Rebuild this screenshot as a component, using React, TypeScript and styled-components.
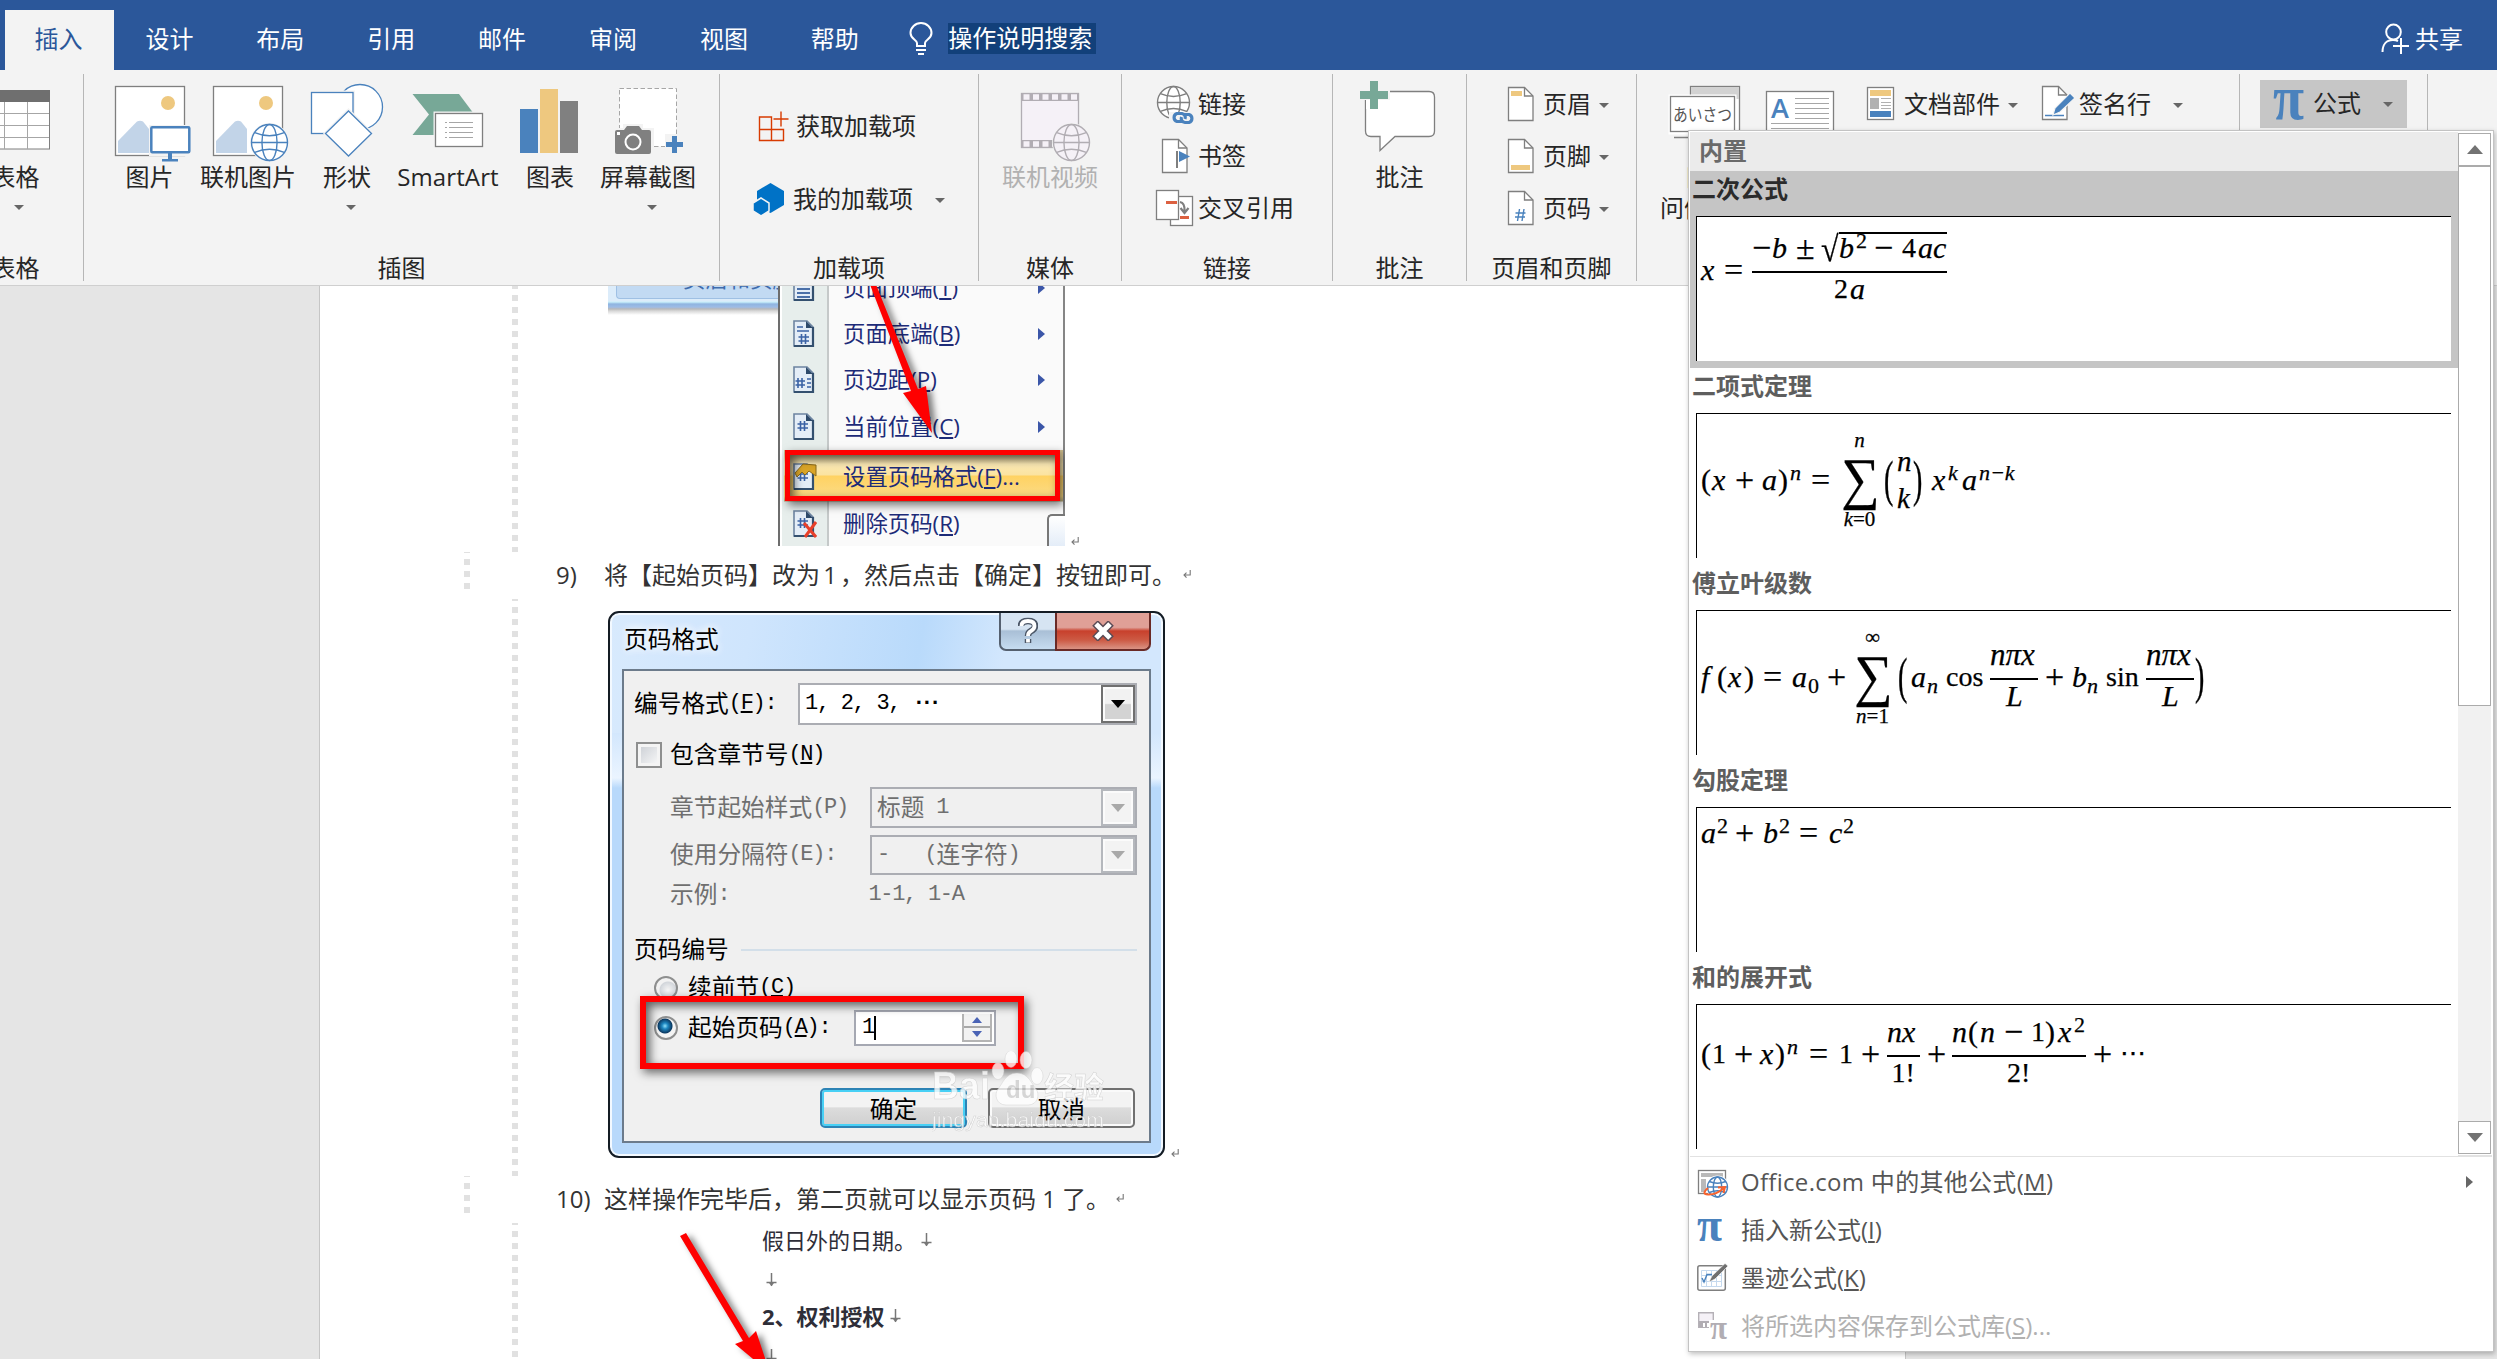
import React from "react";
import styled, { createGlobalStyle, css } from "styled-components";

const UI = `"Open Sans", "Noto Sans CJK SC", sans-serif`;
const MATH = `"Liberation Serif", "DejaVu Serif", serif`;
const BLUE = "#4a82bd";
const GREY = "#7f7f7f";

const GlobalStyle = createGlobalStyle`
  * { box-sizing: border-box; }
  body { margin: 0; background: #e5e5e5; font-family: ${UI}; }
  svg { display: block; flex: none; }
`;

const Window = styled.div`
  position: relative;
  display: flex;
  flex-direction: column;
  width: 2497px;
  height: 1359px;
  overflow: hidden;
  background: #e5e5e5;
  font-family: ${UI};
  font-size: 24px;
  line-height: 28px;
  color: #262626;
  white-space: nowrap;
`;

/* ---------- title bar ---------- */

const TitleBar = styled.header`
  display: flex;
  height: 70px;
  flex: none;
  padding: 10px 34px 0 5px;
  background: #2b579a;
  color: #fff;
`;

const Tab = styled.div<{ $active?: boolean }>`
  width: ${(p) => (p.$active ? 109 : 110.9)}px;
  display: flex;
  align-items: center;
  justify-content: center;
  padding-bottom: 3px;
  padding-right: ${(p) => (p.$active ? 2 : 0)}px;
  ${(p) => p.$active && css`background: #f3f3f3; color: #2b579a;`}
`;

const TellMe = styled.div`
  display: flex;
  align-items: center;
  padding-bottom: 3px;
  margin-left: 15px;
`;

const TellMeText = styled.span`
  margin-left: 10px;
  height: 31px;
  line-height: 30px;
  width: 148px;
  background: #12407a;
`;

const Share = styled.div`
  display: flex;
  align-items: center;
  gap: 5px;
  margin-left: auto;
  padding-bottom: 3px;
`;

/* ---------- ribbon ---------- */

const Ribbon = styled.section`
  display: flex;
  flex: none;
  height: 216px;
  padding-top: 4px;
  background: #f3f3f3;
  border-bottom: 1px solid #cfcfcf;
`;

const Group = styled.div<{ $w: number; $shift?: number }>`
  flex: none;
  width: ${(p) => p.$w}px;
  margin-left: ${(p) => p.$shift ?? 0}px;
  height: 207px;
  display: flex;
  flex-direction: column;
  border-right: 1px solid #b6b6b6;
`;

const GroupBody = styled.div<{ $left?: number; $center?: boolean }>`
  display: flex;
  flex: none;
  height: 181px;
  padding-left: ${(p) => p.$left ?? 0}px;
  justify-content: ${(p) => (p.$center ? "center" : "flex-start")};
`;

const GroupLabel = styled.div`
  text-align: center;
  line-height: 26px;
`;

const BigBtn = styled.div<{ $w?: number; $off?: boolean }>`
  width: ${(p) => p.$w ?? 100}px;
  padding-top: 6px;
  display: flex;
  flex-direction: column;
  align-items: center;
  line-height: 26px;
  color: ${(p) => (p.$off ? "#b1b1b1" : "inherit")};
`;

const Rows = styled.div<{ $top: number; $h: number }>`
  padding-top: ${(p) => p.$top}px;
  & > div { height: ${(p) => p.$h}px; }
`;

const Row = styled.div`
  display: flex;
  align-items: center;
`;

const RowText = styled.span`
  line-height: 26px;
  padding-bottom: 2px;
`;

const Caret = styled.i<{ $gap?: number; $top?: number }>`
  flex: none;
  width: 0;
  height: 0;
  margin-left: ${(p) => p.$gap ?? 0}px;
  margin-top: ${(p) => p.$top ?? 0}px;
  border: 5px solid transparent;
  border-top: 5px solid #666;
  border-bottom: 0;
`;

const CaretLine = styled.span`
  display: flex;
  align-items: center;
  line-height: 32px;
  margin-top: 2px;
`;

const EquationBtn = styled.div`
  display: flex;
  align-items: center;
  width: 147px;
  height: 48px;
  margin-top: 6px;
  padding-left: 13px;
  background: #c6c6c6;
`;

/* ---------- document ---------- */

const Canvas = styled.main`
  flex: 1;
  padding-left: 319px;
  background: #e5e5e5;
`;

const Page = styled.div`
  width: 1587px;
  height: 1073px;
  overflow: hidden;
  background: #fff;
  border-left: 1px solid #c6c6c6;
  border-right: 1px solid #c6c6c6;
  color: #333;
`;

const Section = styled.div<{ $h: number }>`
  display: flex;
  height: ${(p) => p.$h}px;
`;

const Dashes = styled.div<{ $left: number; $phase: number; $h?: string }>`
  flex: none;
  width: 6px;
  margin-left: ${(p) => p.$left}px;
  height: ${(p) => p.$h ?? "100%"};
  background: linear-gradient(#e1e1e1 6px, transparent 6px) 0 ${(p) => p.$phase}px / 6px 12px;
`;

const Figure = styled.div<{ $top?: number }>`
  display: flex;
  align-items: flex-end;
  align-self: flex-start;
  margin: ${(p) => p.$top ?? 0}px 0 0 90px;
`;

const ParaNo = styled.span`
  width: 48px;
  margin-left: 86px;
  line-height: 45px;
`;

const ParaText = styled.span`
  display: flex;
  align-items: center;
  line-height: 45px;
  height: 45px;
`;

const Mark = styled.span<{ $gap: number }>`
  margin-left: ${(p) => p.$gap}px;
`;

const Num = styled.span<{ $w: number }>`
  display: inline-block;
  width: ${(p) => p.$w}px;
  text-align: center;
`;

/* ---------- page-number menu figure ---------- */

const MenuShot = styled.div`
  position: relative;
  display: flex;
  width: 457px;
  height: 260px;
  overflow: hidden;
  font-size: 22.4px;
  color: #1d2b78;
`;

const OldRibbon = styled.div`
  width: 170px;
  height: 29px;
  padding-left: 8px;
  background: linear-gradient(#dcecfa 0 15px, #c9f0fb 16px, #8fb4e0 18px, #9dbce6 21px, #b9b9b9 23px, #d8d8d8 25px, #fff 29px);
`;

const OldRibbonTab = styled.div`
  height: 13px;
  padding-left: 66px;
  overflow: hidden;
  background: #c2daf3;
  border: solid #9fc0e4;
  border-width: 0 0 1px 1px;
  border-radius: 0 0 0 4px;
  color: #3f6cad;
  & span { display: block; margin-top: -21px; }
`;

const OldMenu = styled.div`
  width: 287px;
  padding-left: 2px;
  border-left: 2px solid #6d6d6d;
  border-right: 2px solid #858585;
  background: linear-gradient(90deg, #fff 2px, #e7eeec 2px 47px, #c5c9c9 47px 49px, #fafafa 49px);
`;

const OldItem = styled.div<{ $h?: number; $hot?: boolean; $first?: boolean }>`
  display: flex;
  align-items: center;
  height: ${(p) => p.$h ?? 46.3}px;
  margin-top: ${(p) => (p.$first ? -21.5 : 0)}px;
  padding: 0 18px 0 9px;
  ${(p) => p.$hot && css`
    margin-left: 2px;
    padding-left: 7px;
    background: linear-gradient(#cdbb8c 3px, #fbe9b4 14px, #fbe3a0 25px, #ffd262 26px, #fbdb84 46px, #b9a97a 51px, transparent 52px);
  `}
`;

const OldIcon = styled.span`
  width: 52px;
`;

const SubArrow = styled.i<{ $c?: string }>`
  margin-left: auto;
  border: 6.5px solid transparent;
  border-left: 7px solid ${(p) => p.$c ?? "#3b56a8"};
  border-right: 0;
`;

const RedFrame = styled.div<{ $x: number; $y: number; $w: number; $h: number; $b: number }>`
  position: absolute;
  left: ${(p) => p.$x}px;
  top: ${(p) => p.$y}px;
  width: ${(p) => p.$w}px;
  height: ${(p) => p.$h}px;
  border: ${(p) => p.$b}px solid #fe0000;
  box-shadow: 3px 4px 9px rgba(0, 0, 0, 0.55), inset 4px 4px 10px rgba(0, 0, 0, 0.6);
`;

const Overlay = styled.svg`
  position: absolute;
  left: 0;
  top: 0;
  filter: drop-shadow(5px 3px 3px rgba(0, 0, 0, 0.5));
`;

const Corner = styled.div`
  position: absolute;
  right: 0;
  bottom: 0;
  width: 18px;
  height: 32px;
  border: solid #777;
  border-width: 2px 0 0 2px;
  border-radius: 5px 0 0 0;
  background: linear-gradient(#fff, #e4edf8);
`;

/* ---------- page-number dialog figure ---------- */

const Dialog = styled.div`
  position: relative;
  width: 557px;
  height: 547px;
  padding: 0 12px;
  border: 2px solid #141c24;
  border-radius: 11px;
  background: linear-gradient(100deg, #d8eafd 0, #cfe5fd 25%, #b9dafb 55%, #d3e7fd 70%, #d3e7fd 100%) 0 0 / 100% 120px no-repeat,
    linear-gradient(#d3e7fd 120px, #eaf4ff 165px, #b8d9fb 175px);
  box-shadow: inset 0 0 0 2px #f3f9ff;
  font-size: 23.7px;
  color: #000;
`;

const DialogHead = styled.div`
  display: flex;
  height: 56px;
  padding-left: 2px;
`;

const DialogTitle = styled.span`
  line-height: 53px;
  text-shadow: 0 0 8px #fff, 0 0 8px #fff;
`;

const HelpBtn = styled.span`
  width: 56px;
  height: 38px;
  margin-left: auto;
  display: flex;
  align-items: center;
  justify-content: center;
  border: 2px solid #55606f;
  border-top: 0;
  border-right: 0;
  border-radius: 0 0 0 7px;
  background: linear-gradient(#d6e4f2 45%, #a9bfd6 50%, #c6dcf0);
`;

const CloseBtn = styled(HelpBtn)`
  width: 96px;
  margin-left: 0;
  border-color: #6a2a26;
  border-right: 2px solid #6a2a26;
  border-radius: 0 0 7px 0;
  background: linear-gradient(#e0a097 40%, #c8402c 50%, #cc5a44 75%, #d99384);
`;

const Client = styled.div`
  height: 474px;
  border: 2px solid #6c7b8b;
  background: #f0f0f0;
  padding: 0 12px 0 10px;
`;

const Field = styled.div<{ $top: number; $h: number; $left?: number; $off?: boolean; $gap?: number }>`
  display: flex;
  align-items: center;
  gap: ${(p) => p.$gap ?? 0}px;
  margin-top: ${(p) => p.$top}px;
  height: ${(p) => p.$h}px;
  padding-left: ${(p) => p.$left ?? 0}px;
  color: ${(p) => (p.$off ? "#6f6f6f" : "#000")};
`;

const FieldText = styled.span`
  padding-bottom: 2px;
  line-height: 26px;
`;

const Mono = styled.span<{ $w?: number }>`
  width: ${(p) => (p.$w ? `${p.$w}px` : "auto")};
  font-family: "Liberation Mono", monospace;
  font-size: 22px;
  letter-spacing: -1.3px;
  white-space: pre;
`;

const Dots = styled(Mono)`
  letter-spacing: -5px;
  font-weight: 700;
`;

const Combo = styled.div<{ $w: number; $off?: boolean }>`
  display: flex;
  align-items: center;
  width: ${(p) => p.$w}px;
  height: 100%;
  margin-left: auto;
  padding-left: 5px;
  border: 2px solid #abadb3;
  background: ${(p) => (p.$off ? "#f0f0f0" : "#fff")};
`;

const ComboBtn = styled.span<{ $off?: boolean }>`
  display: flex;
  align-items: center;
  justify-content: center;
  width: 34px;
  height: 100%;
  margin-left: auto;
  border: 2px solid ${(p) => (p.$off ? "#b5b8bd" : "#707070")};
  background: ${(p) => (p.$off ? "#f3f3f3" : "linear-gradient(#f2f2f2 48%, #d3d3d3 52%)")};
  box-shadow: inset 0 0 0 2px #fbfbfb;
  & i { border: 7px solid transparent; border-top: 8px solid ${(p) => (p.$off ? "#a9a9a9" : "#000")}; border-bottom: 0; }
`;

const Check = styled.span`
  width: 26px;
  height: 26px;
  margin-right: 8px;
  border: 2px solid #8e8f8f;
  box-shadow: inset 0 0 0 3px #f4f4f4;
  background: linear-gradient(135deg, #c8ccd2, #fbfbfb);
`;

const Radio = styled.span<{ $on?: boolean }>`
  width: 24px;
  height: 24px;
  margin-right: 10px;
  border: 2px solid #8e8f8f;
  border-radius: 50%;
  background: ${(p) =>
    p.$on
      ? "radial-gradient(circle at 45% 40%, #8fe0fa 0, #1d86c0 3px, #0b3a63 7px, #f4f4f4 8px)"
      : "radial-gradient(circle at 60% 60%, #f6f6f6 0, #d2d6db 8px, #f2f2f2 9px)"};
`;

const Rule = styled.span`
  flex: 1;
  height: 2px;
  margin-left: 12px;
  background: #d3dfe9;
`;

const Spin = styled.div`
  display: flex;
  width: 142px;
  height: 36px;
  margin-left: auto;
  margin-right: 141px;
  padding: 2px 2px 2px 6px;
  align-items: center;
  border: 2px solid #a5a8b2;
  background: #fff;
`;

const TextCaret = styled.i`
  width: 2px;
  height: 24px;
  background: #000;
`;

const SpinBtns = styled.span`
  display: flex;
  flex-direction: column;
  width: 30px;
  height: 28px;
  margin-left: auto;
  border: 2px solid #b4b4b4;
  border-top: 0;
`;

const SpinHalf = styled.span<{ $up?: boolean }>`
  display: flex;
  flex: 1;
  align-items: center;
  justify-content: center;
  background: #f2f2f2;
  border-bottom: ${(p) => (p.$up ? "2px solid #a8a8a8" : "0")};
  & i {
    border: 5px solid transparent;
    ${(p) => (p.$up ? "border-bottom: 6px solid #4a63b5; border-top: 0;" : "border-top: 6px solid #4a63b5; border-bottom: 0;")}
  }
`;

const DlgBtn = styled.span<{ $primary?: boolean }>`
  width: 147px;
  height: 40px;
  display: flex;
  align-items: center;
  justify-content: center;
  padding-top: 2px;
  border: 2px solid ${(p) => (p.$primary ? "#2d83b5" : "#707070")};
  border-radius: 5px;
  background: linear-gradient(#f3f3f3 46%, #dcdcdc 50%, #cfcfcf);
  box-shadow: inset 0 0 0 2px ${(p) => (p.$primary ? "#48d0f5" : "#fafafa")};
`;

const Watermark = styled.div`
  position: absolute;
  left: 322px;
  top: 438px;
  opacity: 0.78;
`;

/* ---------- contract figure ---------- */

const ContractShot = styled.div`
  position: relative;
  width: 400px;
  height: 136px;
  padding: 3px 0 0 154px;
  line-height: 28px;
  font-size: 22px;
  color: #2e2e38;
`;

const ContractLine = styled.div<{ $h: number; $bold?: boolean; $left?: number }>`
  display: flex;
  align-items: center;
  gap: 5px;
  height: ${(p) => p.$h}px;
  padding-left: ${(p) => p.$left ?? 0}px;
  font-weight: ${(p) => (p.$bold ? 700 : 400)};
`;

/* ---------- equation gallery ---------- */

const Gallery = styled.aside`
  position: absolute;
  left: 1688px;
  top: 130px;
  width: 806px;
  height: 1222px;
  padding: 1px;
  border: 1px solid #c3c3c3;
  background: #fff;
  box-shadow: 1px 2px 5px rgba(0, 0, 0, 0.25);
  color: #555;
`;

const GalleryTop = styled.div`
  display: flex;
  height: 1025px;
  border-bottom: 2px solid #e2e2e2;
`;

const GalleryList = styled.div`
  width: 768px;
`;

const GalleryHead = styled.div`
  height: 39px;
  padding-left: 9px;
  line-height: 37px;
  font-weight: 700;
  color: #6a6a6a;
  background: #ebebeb;
`;

const Item = styled.div<{ $on?: boolean }>`
  height: 197px;
  padding: 0 7px 0 6px;
  background: ${(p) => (p.$on ? "#c5c5c5" : "#fff")};
`;

const ItemTitle = styled.div<{ $on?: boolean }>`
  height: 45px;
  margin-left: -4px;
  line-height: 36px;
  font-weight: 700;
  color: ${(p) => (p.$on ? "#2b2b2b" : "#5e5e5e")};
`;

const Preview = styled.div<{ $axis: number }>`
  display: flex;
  align-items: center;
  width: 755px;
  height: 145px;
  padding-left: 4px;
  padding-bottom: ${(p) => Math.max(0, 144 - 2 * p.$axis)}px;
  border: solid #000;
  border-width: 1px 0 0 1px;
  background: #fff;
  color: #000;
  font-family: ${MATH};
  font-size: 28px;
  -webkit-text-stroke: 0.25px #000;
`;

const Scroll = styled.div`
  width: 34px;
  padding: 1px 1px 1px 0;
  display: flex;
  flex-direction: column;
`;

const ScrollBtn = styled.div<{ $down?: boolean }>`
  height: 33px;
  display: flex;
  align-items: center;
  justify-content: center;
  border: 1px solid #ababab;
  background: #fff;
  & i {
    border: 8px solid transparent;
    ${(p) => (p.$down ? "border-top: 9px solid #737373; border-bottom: 0;" : "border-bottom: 9px solid #737373; border-top: 0;")}
  }
`;

const Thumb = styled.div`
  height: 540px;
  border: 1px solid #ababab;
  background: #fff;
`;

const Track = styled.div`
  flex: 1;
  background: #f1f1f1;
`;

const MenuItem = styled.div<{ $off?: boolean }>`
  display: flex;
  align-items: center;
  height: 48px;
  padding: 0 19px 0 7px;
  color: ${(p) => (p.$off ? "#b1b1b1" : "#555")};
  & > svg { margin-right: 12px; }
`;

const Latin = styled.span<{ $sp?: number }>`
  letter-spacing: ${(p) => p.$sp ?? 0}px;
`;

const MenuBlock = styled.div`
  padding-top: 1px;
`;

/* ---------- math pieces ---------- */

const Tk = styled.span<{ $w: number; $up?: boolean; $s?: number }>`
  flex: none;
  width: ${(p) => p.$w}px;
  padding-bottom: 5px;
  line-height: 30px;
  font-style: ${(p) => (p.$up ? "normal" : "italic")};
  font-size: ${(p) => p.$s ?? (p.$up ? 28 : 30)}px;
`;

const Sup = styled.span<{ $w: number; $up?: boolean }>`
  flex: none;
  width: ${(p) => p.$w}px;
  padding-bottom: 19px;
  line-height: 14px;
  font-size: 22px;
  font-style: ${(p) => (p.$up ? "normal" : "italic")};
`;

const Sub = styled(Sup)`
  padding: 13px 0 0;
`;

const Frac = styled.span<{ $w: number; $r: number }>`
  flex: none;
  width: ${(p) => p.$w}px;
  margin-right: ${(p) => p.$r}px;
  display: flex;
  flex-direction: column;
`;

const Numer = styled.span`
  display: flex;
  align-items: center;
  height: 39px;
  padding-bottom: 4px;
  border-bottom: 1px solid #000;
`;

const Denom = styled.span`
  display: flex;
  align-items: center;
  justify-content: center;
  height: 39px;
  padding-bottom: 2px;
  border-top: 1px solid #000;
`;

const Radicand = styled.span`
  display: flex;
  align-items: center;
  height: 36px;
  border-top: 2px solid #000;
  padding-bottom: 1px;
`;

const Root = styled.span`
  flex: none;
  width: 18px;
  line-height: 30px;
  padding-bottom: 3px;
  font-size: 32px;
  transform: scaleY(1.12);
`;

const BigOp = styled.span<{ $w: number }>`
  flex: none;
  display: flex;
  flex-direction: column;
  width: ${(p) => p.$w}px;
  font-size: 21px;
`;

const Limit = styled.span<{ $low?: boolean; $italic?: boolean }>`
  height: 24px;
  width: 37px;
  text-align: center;
  line-height: ${(p) => (p.$low ? 15 : 24)}px;
  font-style: ${(p) => (p.$italic ? "italic" : "normal")};
`;

const Sigma = styled.span`
  height: 60px;
  line-height: 54px;
  font-size: 54px;
  transform: scaleY(1.06);
`;

const Tall = styled.span<{ $w: number }>`
  flex: none;
  width: ${(p) => p.$w}px;
  padding-bottom: 2px;
  line-height: 30px;
  transform: scaleY(1.8);
`;

const Stack = styled.span<{ $w: number }>`
  flex: none;
  width: ${(p) => p.$w}px;
  display: flex;
  flex-direction: column;
  font-style: italic;
  font-size: 29px;
  line-height: 40px;
  padding-bottom: 8px;
  & span { height: 37px; }
`;

/* ---------- drawings ---------- */

type Box = { box: string; children: React.ReactNode };
const Art = ({ box, children }: Box) => {
  const [, , w, h] = box.split(" ");
  return (
    <svg width={w} height={h} viewBox={box} fill="none">
      {children}
    </svg>
  );
};

const Globe = ({ cx, cy, r, c = BLUE, fill = "#fff", halo = "#f3f3f3" }: { cx: number; cy: number; r: number; c?: string; fill?: string; halo?: string }) => (
  <g stroke={c} strokeWidth="1.4">
    <circle cx={cx} cy={cy} r={r + 1.5} fill={halo} stroke="none" />
    <circle cx={cx} cy={cy} r={r} fill={fill} />
    <ellipse cx={cx} cy={cy} rx={r * 0.42} ry={r} />
    <path d={`M${cx - r} ${cy}H${cx + r}M${cx - r * 0.82} ${cy - r * 0.55}Q${cx} ${cy - r * 0.2} ${cx + r * 0.82} ${cy - r * 0.55}M${cx - r * 0.82} ${cy + r * 0.55}Q${cx} ${cy + r * 0.2} ${cx + r * 0.82} ${cy + r * 0.55}`} />
  </g>
);

const Photo = ({ x }: { x: number }) => (
  <g>
    <rect x={x + 0.5} y="86.5" width="69" height="69" fill="#fff" stroke={GREY} strokeWidth="1.3" />
    <circle cx={x + 53} cy="103" r="7" fill="#eec87f" />
    <path d={`M${x + 3} 153V141L${x + 22} 121.5Q${x + 25} 120 ${x + 28} 121.5L${x + 34} 129V153Z`} fill="#c2d4e8" />
  </g>
);

const Sheet = ({ x, y, children }: { x: number; y: number; children?: React.ReactNode }) => (
  <g>
    <path d={`M${x} ${y}H${x + 16}L${x + 24.5} ${y + 8.5}V${y + 33}H${x}Z`} fill="#fff" stroke={GREY} strokeWidth="1.3" />
    <path d={`M${x + 16} ${y}V${y + 8.5}H${x + 24.5}`} stroke={GREY} strokeWidth="1.3" />
    {children}
  </g>
);

const Pi = ({ w, h, c = BLUE }: { w: number; h: number; c?: string }) => (
  <svg width={w} height={h} viewBox={`0 0 ${w} ${h}`}>
    <text x="0" y={h - 1} fill={c} fontFamily="Liberation Serif" fontWeight="700" fontSize={h * 2} textLength={w} lengthAdjust="spacingAndGlyphs">π</text>
  </svg>
);

const Return = () => (
  <svg width="8" height="9" viewBox="0 0 8 9" fill="none" stroke="#777" strokeWidth="1.1">
    <path d="M7.2 0V5H1M3.5 2.6L1 5L3.5 7.6" />
  </svg>
);

const DownMark = () => (
  <svg width="11" height="16" viewBox="0 0 11 16" fill="none" stroke="#777" strokeWidth="1.5">
    <path d="M5.5 1V14M0.5 10.5H10.5M3.5 10.5L5.5 13L7.5 10.5" />
  </svg>
);

const OldPage = ({ kind }: { kind: number }) => (
  <svg width="26" height="28" viewBox="0 0 26 28" fill="none">
    <path d="M3 1H16L22 7V26H3Z" fill="#e4edf7" stroke="#6d84a1" strokeWidth="1.600" />
    <path d="M22 7V26H3" stroke="#34506f" strokeWidth="2.200" />
    <path d="M15 1V8H22Z" fill="#2e4a6b" />
    {kind === 0 && <path d="M6 11H19M6 15H19M6 19H19M6 23H19" stroke="#4a6fa8" strokeWidth="2" />}
    {kind === 1 && <path d="M6 7H12M6 11H18M10.500 14V24M14.500 14V24M7.500 17H18M7.500 21H18" stroke="#3a62a5" strokeWidth="1.600" />}
    {kind === 2 && <path d="M7 12V22M11 12V22M4.500 15H14M4.500 19H14M16 13H20M16 17H20M16 21H20" stroke="#3a62a5" strokeWidth="1.600" />}
    {kind >= 3 && <path d="M9.500 8V18M13.500 8V18M6.500 11H17M6.500 15H17" stroke="#3a62a5" strokeWidth="1.600" />}
    {kind === 4 && <path d="M4 10L12 1L25 2V13L18 8L14 12L11 9L6 14Z" fill="#d9a427" stroke="#8a6a1c" />}
    {kind === 5 && <path d="M13 13L25 27M25 12L14 27" stroke="#e8402a" strokeWidth="3" />}
  </svg>
);

const Mn = ({ k }: { k: string }) => (
  <>
    (<u>{k}</u>)
  </>
);

/* ---------- app ---------- */

export default function App() {
  return (
    <>
      <GlobalStyle />
      <Window>
        <TitleBar>
          <Tab $active>插入</Tab>
          {["设计", "布局", "引用", "邮件", "审阅", "视图", "帮助"].map((t) => (
            <Tab key={t}>{t}</Tab>
          ))}
          <TellMe>
            <svg width="33" height="36" viewBox="905 23 33 36" fill="none" stroke="#fff" strokeWidth="2">
              <path d="M917 48V45C917 42 910.5 41 910.5 35A10.5 10 0 0 1 931.500 35C931.500 41 925 42 925 45V48Z" />
              <path d="M916 52H926M918 56H924" />
            </svg>
            <TellMeText>操作说明搜索</TellMeText>
          </TellMe>
          <Share>
            <svg width="30" height="34" viewBox="2379 21 30 34" fill="none" stroke="#fff" strokeWidth="2">
              <ellipse cx="2392.500" cy="31" rx="7.300" ry="7.500" />
              <path d="M2381.500 51C2381.500 43 2386 39 2392 39Q2395 39 2397 40M2400 37V53M2392 45H2408" />
            </svg>
            共享
          </Share>
        </TitleBar>

        <Ribbon>
          <Group $w={136} $shift={-52}>
            <GroupBody $center>
              <BigBtn>
                <Art box="-29 80 90 84">
                  <rect x="-18" y="90.5" width="67.500" height="58.500" fill="#fff" stroke={GREY} />
                  <path d="M-18 90H50V102H-18Z" fill="#6f6f6f" />
                  <path d="M-18 113.500H49M-18 125.500H49M-18 137.500H49M4.500 102V149M27.500 102V149" stroke="#a6a6a6" />
                </Art>
                表格
                <Caret $top={15} $gap={7} />
              </BigBtn>
            </GroupBody>
            <GroupLabel>表格</GroupLabel>
          </Group>

          <Group $w={636}>
            <GroupBody $left={16}>
              <BigBtn $w={99}>
                <Art box="105 80 90 84">
                  <Photo x={115} />
                  <rect x="149" y="125" width="43" height="31" fill="#f3f3f3" />
                  <rect x="151.300" y="127.200" width="38" height="25" rx="1" fill="#fff" stroke={BLUE} strokeWidth="2.500" />
                  <path d="M168 153H172V159H178V161.500H162V159H168Z" fill={BLUE} />
                </Art>
                图片
              </BigBtn>
              <BigBtn $w={98}>
                <Art box="203 80 90 84">
                  <Photo x={213} />
                  <Globe cx={269.5} cy={142.5} r={18} />
                </Art>
                联机图片
              </BigBtn>
              <BigBtn>
                <Art box="302 80 90 84">
                  <circle cx="360" cy="107" r="22.500" fill="#fff" stroke={BLUE} strokeWidth="1.300" />
                  <rect x="309.500" y="90.500" width="45.500" height="45" fill="#f3f3f3" />
                  <rect x="311.500" y="92.500" width="41.500" height="41" fill="#fff" stroke={BLUE} strokeWidth="1.300" />
                  <path d="M348.500 108L374 133.500L348.500 159L323 133.500Z" fill="#f3f3f3" />
                  <path d="M348.500 111L371.500 133.500L348.500 156L325.500 133.500Z" fill="#fff" stroke={BLUE} strokeWidth="1.300" />
                </Art>
                形状
                <Caret $top={15} $gap={7} />
              </BigBtn>
              <BigBtn $w={102}>
                <Art box="403 80 90 84">
                  <path d="M412.500 94H459L474 114H460V135H412.500L429 114.500Z" fill="#77a897" />
                  <rect x="433.500" y="111.500" width="51" height="37" fill="#f3f3f3" />
                  <rect x="435.500" y="113.500" width="47" height="33" fill="#fff" stroke={GREY} strokeWidth="1.300" />
                  <path d="M449 122.500H473M449 127.500H473M449 132.500H473M449 137.500H473M445 122.500H447M445 127.500H447M445 132.500H447M445 137.500H447" stroke="#a6a6a6" />
                </Art>
                <Latin $sp={0.1}>SmartArt</Latin>
              </BigBtn>
              <BigBtn $w={102}>
                <Art box="505 80 90 84">
                  <path d="M520 109H538V153H520Z" fill={BLUE} />
                  <path d="M540 89H558V153H540Z" fill="#eec87f" />
                  <path d="M560 101H578V153H560Z" fill="#808080" />
                </Art>
                图表
              </BigBtn>
              <BigBtn $w={94}>
                <Art box="603 80 90 84">
                  <rect x="619.500" y="88.500" width="57" height="58" fill="#fff" stroke="#a6a6a6" strokeDasharray="4.500 2.500" />
                  <path d="M613 128H623V124H643V128H654V156H613Z" fill="#f3f3f3" />
                  <path d="M615 132Q615 130 617 130H624L627 126H639L642 130H649Q651 130 651 132V152Q651 154 649 154H617Q615 154 615 152Z" fill="#808080" />
                  <circle cx="633" cy="142" r="7.500" stroke="#fff" strokeWidth="2" />
                  <path d="M617 132H620V135H617Z" fill="#fff" />
                  <path d="M665 134H685V155H665Z" fill="#f3f3f3" />
                  <path d="M672 136H677V142H683V147H677V153H672V147H666V142H672Z" fill={BLUE} />
                </Art>
                屏幕截图
                <Caret $top={15} $gap={8} />
              </BigBtn>
            </GroupBody>
            <GroupLabel>插图</GroupLabel>
          </Group>

          <Group $w={259}>
            <GroupBody $left={29}>
              <Rows $top={16.5} $h={73}>
                <Row>
                  <Art box="749 104 47 44">
                    <path d="M759.500 116H771.500V128.500H783.500V139.500H759.500ZM759.500 128.500H771.500V139.500M773.500 118H788.500M781 110.500V125.500" stroke="#d83b01" strokeWidth="1.400" />
                  </Art>
                  <RowText>获取加载项</RowText>
                </Row>
                <Row>
                  <Art box="749 178 44 44">
                    <path d="M770.500 183L784 191V205L770.500 213L757 205V191Z" fill="#0072c6" />
                    <path d="M761 198L769 203V211L761 216L753 211V203Z" fill="#0072c6" stroke="#f3f3f3" strokeWidth="1.500" />
                  </Art>
                  <RowText>我的加载项</RowText>
                  <Caret $gap={22} />
                </Row>
              </Rows>
            </GroupBody>
            <GroupLabel>加载项</GroupLabel>
          </Group>

          <Group $w={143}>
            <GroupBody $center>
              <BigBtn $off>
                <Art box="1005 80 90 84">
                  <rect x="1021.500" y="93.500" width="57" height="54" fill="#f5f1f7" stroke="#b1adb3" strokeWidth="1.300" />
                  <path d="M1021 93H1079V101H1021ZM1021 140H1079V148H1021Z" fill="#b1adb3" />
                  <path d="M1023.500 97H1079M1023.500 144H1079" stroke="#f5f1f7" strokeWidth="5.500" strokeDasharray="6 3.500" />
                  <Globe cx={1071.5} cy={142.5} r={18} c="#b1adb3" fill="#f5f1f7" />
                </Art>
                联机视频
              </BigBtn>
            </GroupBody>
            <GroupLabel>媒体</GroupLabel>
          </Group>

          <Group $w={211}>
            <GroupBody $left={30}>
              <Rows $top={5} $h={52}>
                <Row>
                  <Art box="1152 83 46 44">
                    <Globe cx={1173.5} cy={102.5} r={16} c={GREY} />
                    <path d="M1169 112H1197V125H1169Z" fill="#f3f3f3" />
                    <path d="M1182 121.500H1177A4.200 4.200 0 0 1 1177 113.500H1182A4 4 0 0 1 1185 119M1184 114.500H1189A4.200 4.200 0 0 1 1189 122.500H1185A4 4 0 0 1 1181.500 117" stroke={BLUE} strokeWidth="3.200" />
                  </Art>
                  <RowText>链接</RowText>
                </Row>
                <Row>
                  <Art box="1152 135 46 44">
                    <Sheet x={1162.5} y={139.5} />
                    <path d="M1177 151V168" stroke={GREY} strokeWidth="2" />
                    <path d="M1179 151L1190 156.500L1179 162Z" fill={BLUE} />
                  </Art>
                  <RowText>书签</RowText>
                </Row>
                <Row>
                  <Art box="1152 187 46 44">
                    <rect x="1170.500" y="196.500" width="22" height="29" fill="#fff" stroke={GREY} strokeWidth="1.300" />
                    <rect x="1156.500" y="190.500" width="22" height="29" fill="#fff" stroke={GREY} strokeWidth="1.300" />
                    <path d="M1166 202.500H1177M1180 217.500H1189" stroke="#dc6141" strokeWidth="3" />
                    <path d="M1180 202Q1185 203 1184.500 211M1180.500 208L1184.500 213L1188.500 208" stroke={GREY} strokeWidth="2.200" />
                  </Art>
                  <RowText>交叉引用</RowText>
                </Row>
              </Rows>
            </GroupBody>
            <GroupLabel>链接</GroupLabel>
          </Group>

          <Group $w={134}>
            <GroupBody $center>
              <BigBtn>
                <Art box="1355 80 90 84">
                  <path d="M1371 91.500H1429Q1434.500 91.500 1434.500 97V131Q1434.500 136.500 1429 136.500H1395L1380 150.500V136.500H1371Q1365.500 136.500 1365.500 131V97Q1365.500 91.500 1371 91.500Z" fill="#fff" stroke={GREY} strokeWidth="1.300" />
                  <path d="M1358 80H1390V100H1380V100H1364V110H1358Z" fill="#f3f3f3" />
                  <path d="M1366 100H1389V109H1366Z" fill="#fff" />
                  <path d="M1370 81H1378V91H1388V99H1378V109H1370V99H1360V91H1370Z" fill="#77a897" />
                </Art>
                批注
              </BigBtn>
            </GroupBody>
            <GroupLabel>批注</GroupLabel>
          </Group>

          <Group $w={170}>
            <GroupBody $left={36}>
              <Rows $top={5} $h={52}>
                <Row>
                  <Art box="1503 83 40 44">
                    <Sheet x={1508.5} y={87.5}>
                      <path d="M1511 91H1522V96H1511Z" fill="#eec87f" />
                    </Sheet>
                  </Art>
                  <RowText>页眉</RowText>
                  <Caret $gap={8} />
                </Row>
                <Row>
                  <Art box="1503 135 40 44">
                    <Sheet x={1508.5} y={139.5}>
                      <path d="M1511 165H1530V170H1511Z" fill="#eec87f" />
                    </Sheet>
                  </Art>
                  <RowText>页脚</RowText>
                  <Caret $gap={8} />
                </Row>
                <Row>
                  <Art box="1503 187 40 44">
                    <Sheet x={1508.5} y={191.5}>
                      <path d="M1519.500 209L1517.500 221M1524 209L1522 221M1515.500 213H1525.500M1515 217H1525" stroke={BLUE} strokeWidth="1.400" />
                    </Sheet>
                  </Art>
                  <RowText>页码</RowText>
                  <Caret $gap={8} />
                </Row>
              </Rows>
            </GroupBody>
            <GroupLabel>页眉和页脚</GroupLabel>
          </Group>

          <Group $w={603}>
            <GroupBody $left={23}>
              <BigBtn $w={96}>
                <Art box="1663 80 90 84">
                  <rect x="1690.500" y="86.500" width="49" height="52" fill="#fff" stroke={GREY} strokeWidth="1.300" />
                  <path d="M1691 87H1739V99H1691Z" fill="#d2d2d2" />
                  <path d="M1674 137.500H1740" stroke={GREY} strokeWidth="1.300" />
                  <rect x="1668.500" y="94.500" width="68" height="40" fill="#fff" />
                  <rect x="1670.500" y="96.500" width="64" height="35" fill="#fff" stroke={GREY} strokeWidth="1.300" />
                  <text x="1673" y="120.500" fontSize="17" textLength="59" lengthAdjust="spacingAndGlyphs" fontFamily="Noto Sans CJK JP" fill="#555">あいさつ</text>
                </Art>
                日文
                <CaretLine>
                  问候语
                  <Caret $gap={14} />
                </CaretLine>
              </BigBtn>
              <BigBtn $w={88}>
                <Art box="1755 80 90 84">
                  <rect x="1766.500" y="91.500" width="67" height="60" fill="#fff" stroke={GREY} strokeWidth="1.300" />
                  <text x="1771" y="118" fontSize="27" fontFamily="Open Sans" fontWeight="600" fill={BLUE}>A</text>
                  <path d="M1795 98.500H1829M1795 103.500H1829M1795 108.500H1829M1795 113.500H1829M1795 118.500H1829M1771 123.500H1829M1771 128.500H1829" stroke="#a6a6a6" />
                </Art>
              </BigBtn>
              <Rows $top={5} $h={52}>
                <Row>
                  <Art box="1844 83 60 44">
                    <rect x="1867.500" y="87.500" width="26" height="32" fill="#fff" stroke={GREY} strokeWidth="1.300" />
                    <path d="M1870 90H1891V96H1870Z" fill="#eec87f" />
                    <path d="M1870 98H1879V109H1870Z" fill="#b1b1b1" />
                    <path d="M1881 98.500H1891M1881 102.500H1891M1881 105.500H1891M1881 108.500H1891" stroke="#b1b1b1" />
                    <path d="M1870 111H1891V117H1870Z" fill={BLUE} />
                  </Art>
                  <RowText>文档部件</RowText>
                  <Caret $gap={8} />
                  <Art box="2018 83 61 44">
                    <Sheet x={2042.5} y={86.5} />
                    <path d="M2045 115.500H2064" stroke={BLUE} strokeWidth="1.500" />
                    <path d="M2053 115L2055 108L2070 93L2075 98L2060 112Z" fill={BLUE} stroke="#f3f3f3" strokeWidth="1.200" />
                  </Art>
                  <RowText>签名行</RowText>
                  <Caret $gap={22} />
                </Row>
              </Rows>
            </GroupBody>
          </Group>

          <Group $w={188}>
            <GroupBody $left={20}>
              <EquationBtn>
                <Pi w={31} h={32} />
                <RowText style={{ marginLeft: 9 }}>公式</RowText>
                <Caret $gap={22} />
              </EquationBtn>
            </GroupBody>
          </Group>
        </Ribbon>

        <Canvas>
          <Page>
            <Section $h={266}>
              <Dashes $left={192} $phase={9} />
              <Figure>
                <MenuShot>
                  <OldRibbon>
                    <OldRibbonTab><span>页眉和页脚</span></OldRibbonTab>
                  </OldRibbon>
                  <OldMenu>
                    <OldItem $first>
                      <OldIcon><OldPage kind={0} /></OldIcon>页面顶端<Mn k="T" />
                      <SubArrow />
                    </OldItem>
                    <OldItem>
                      <OldIcon><OldPage kind={1} /></OldIcon>页面底端<Mn k="B" />
                      <SubArrow />
                    </OldItem>
                    <OldItem>
                      <OldIcon><OldPage kind={2} /></OldIcon>页边距<Mn k="P" />
                      <SubArrow />
                    </OldItem>
                    <OldItem>
                      <OldIcon><OldPage kind={3} /></OldIcon>当前位置<Mn k="C" />
                      <SubArrow />
                    </OldItem>
                    <OldItem $h={54} $hot>
                      <OldIcon><OldPage kind={4} /></OldIcon>设置页码格式<Mn k="F" />...
                    </OldItem>
                    <OldItem $h={40}>
                      <OldIcon><OldPage kind={5} /></OldIcon>删除页码<Mn k="R" />
                    </OldItem>
                  </OldMenu>
                  <RedFrame $x={177} $y={164} $w={275} $h={51} $b={5} />
                  <Corner />
                  <Overlay width="457" height="260">
                    <path d="M261 -4L267 -4L310 103L318 100L324 147L295 107L303 105Z" fill="#fe0000" />
                  </Overlay>
                </MenuShot>
                <Mark $gap={6}><Return /></Mark>
              </Figure>
            </Section>

            <Section $h={47}>
              <Dashes $left={144} $phase={-5} $h="38px" />
              <ParaNo>9)</ParaNo>
              <ParaText>
                将【起始页码】改为<Num $w={20}>1</Num>，然后点击【确定】按钮即可。
                <Mark $gap={7}><Return /></Mark>
              </ParaText>
            </Section>

            <Section $h={577}>
              <Dashes $left={192} $phase={-4} />
              <Figure $top={12}>
                <Dialog>
                  <DialogHead>
                    <DialogTitle>页码格式</DialogTitle>
                    <HelpBtn>
                      <svg width="20" height="28" viewBox="0 0 20 28" fill="none">
                        <path d="M3 9Q3 4 10 4Q17 4 17 9Q17 12 13 14Q10 15.500 10 19M10 22V26" stroke="#4b5666" strokeWidth="6.500" />
                        <path d="M3.500 9Q3.500 4 10 4Q16.500 4 16.500 9Q16.500 12 13 14Q10 15.500 10 19M10 22V25.500" stroke="#fff" strokeWidth="3.800" />
                      </svg>
                    </HelpBtn>
                    <CloseBtn>
                      <svg width="24" height="20" viewBox="0 0 24 20" fill="none">
                        <path d="M4 2L20 18M20 2L4 18" stroke="#5a4b55" strokeWidth="8" />
                        <path d="M5 3L19 17M19 3L5 17" stroke="#fff" strokeWidth="5" />
                      </svg>
                    </CloseBtn>
                  </DialogHead>
                  <Client>
                    <Field $top={12} $h={42}>
                      <FieldText>编号格式</FieldText><Mono>(<u>F</u>):</Mono>
                      <Combo $w={339}>
                        <Mono>1, 2, 3, </Mono><Dots>···</Dots>
                        <ComboBtn><i /></ComboBtn>
                      </Combo>
                    </Field>
                    <Field $top={10} $h={40} $left={2}>
                      <Check />
                      <FieldText>包含章节号</FieldText><Mono>(<u>N</u>)</Mono>
                    </Field>
                    <Field $top={12} $h={41} $left={36} $off>
                      <FieldText>章节起始样式</FieldText><Mono>(P)</Mono>
                      <Combo $w={267} $off>
                        <FieldText>标题</FieldText><Mono> 1</Mono>
                        <ComboBtn $off><i /></ComboBtn>
                      </Combo>
                    </Field>
                    <Field $top={7} $h={40} $left={36} $off>
                      <FieldText>使用分隔符</FieldText><Mono>(E):</Mono>
                      <Combo $w={267} $off>
                        <Mono>-   (</Mono><FieldText>连字符</FieldText><Mono>)</Mono>
                        <ComboBtn $off><i /></ComboBtn>
                      </Combo>
                    </Field>
                    <Field $top={6} $h={28} $left={36} $off>
                      <FieldText>示例</FieldText><Mono $w={151}>:</Mono><Mono>1-1, 1-A</Mono>
                    </Field>
                    <Field $top={27} $h={28}>
                      <FieldText>页码编号</FieldText>
                      <Rule />
                    </Field>
                    <Field $top={10} $h={28} $left={20}>
                      <Radio />
                      <FieldText>续前节</FieldText><Mono>(<u>C</u>)</Mono>
                    </Field>
                    <Field $top={8} $h={36} $left={20}>
                      <Radio $on />
                      <FieldText>起始页码</FieldText><Mono>(<u>A</u>):</Mono>
                      <Spin>
                        <Mono>1</Mono>
                        <TextCaret />
                        <SpinBtns>
                          <SpinHalf $up><i /></SpinHalf>
                          <SpinHalf><i /></SpinHalf>
                        </SpinBtns>
                      </Spin>
                    </Field>
                    <Field $top={42} $h={40} $left={186} $gap={21}>
                      <DlgBtn $primary>确定</DlgBtn>
                      <DlgBtn>取消</DlgBtn>
                    </Field>
                  </Client>
                  <RedFrame $x={30} $y={383} $w={384} $h={73} $b={6} />
                  <Watermark>
                    <svg width="180" height="90" viewBox="0 0 180 90" fill="#fff">
                      <g fontFamily="Liberation Sans" fontWeight="700" stroke="#c9c9c9" strokeWidth="0.500">
                        <text x="0" y="48" fontSize="38" textLength="58" lengthAdjust="spacingAndGlyphs">Bai</text>
                        <path d="M85 22C73 22 70 34 66 38C62 43 64 54 74 54H96C106 54 108 43 104 38C100 34 97 22 85 22Z" />
                        <ellipse cx="66" cy="20" rx="6" ry="8.500" />
                        <ellipse cx="79" cy="8" rx="6" ry="8.500" />
                        <ellipse cx="94" cy="9" rx="6" ry="8.500" />
                        <ellipse cx="105" cy="25" rx="6" ry="8.500" />
                        <text x="74" y="47" fontSize="24" fill="#cfcfcf" stroke="none">du</text>
                        <text x="0" y="76" fontSize="20" textLength="172" lengthAdjust="spacingAndGlyphs" fontWeight="400">jingyan.baidu.com</text>
                      </g>
                      <text x="112" y="47" fontSize="30" fontFamily="Noto Sans CJK SC" fontWeight="700" stroke="#c9c9c9" strokeWidth="0.500">经验</text>
                    </svg>
                  </Watermark>
                </Dialog>
                <Mark $gap={6}><Return /></Mark>
              </Figure>
            </Section>

            <Section $h={47}>
              <Dashes $left={144} $phase={-5} $h="38px" />
              <ParaNo>10)</ParaNo>
              <ParaText>
                这样操作完毕后，第二页就可以显示页码<Num $w={26}>1</Num>了。
                <Mark $gap={6}><Return /></Mark>
              </ParaText>
            </Section>

            <Section $h={136}>
              <Dashes $left={192} $phase={-4} />
              <Figure>
                <ContractShot>
                  <ContractLine $h={28}>假日外的日期。<DownMark /></ContractLine>
                  <ContractLine $h={52} $left={4}><DownMark /></ContractLine>
                  <ContractLine $h={20} $bold>2、权利授权<DownMark /></ContractLine>
                  <ContractLine $h={60} $left={4}><DownMark /></ContractLine>
                  <Overlay width="200" height="136">
                    <path d="M72 13L78 10L141 115L148 108L162 150L127 121L135 118Z" fill="#fe0000" />
                  </Overlay>
                </ContractShot>
              </Figure>
            </Section>
          </Page>
        </Canvas>

        <Gallery>
          <GalleryTop>
            <GalleryList>
              <GalleryHead>内置</GalleryHead>
              <Item $on>
                <ItemTitle $on>二次公式</ItemTitle>
                <Preview $axis={55}>
                  <Tk $w={23}>x</Tk>
                  <Tk $w={28} $up $s={34}>=</Tk>
                  <Frac $w={195} $r={0}>
                    <Numer>
                      <Tk $w={20} $up $s={34}>−</Tk>
                      <Tk $w={24}>b</Tk>
                      <Tk $w={25} $up $s={34}>±</Tk>
                      <Root>√</Root>
                      <Radicand>
                        <Tk $w={17}>b</Tk>
                        <Sup $w={18} $up>2</Sup>
                        <Tk $w={28} $up $s={34}>−</Tk>
                        <Tk $w={16} $up>4</Tk>
                        <Tk $w={29}>ac</Tk>
                      </Radicand>
                    </Numer>
                    <Denom>
                      <Tk $w={16} $up>2</Tk>
                      <Tk $w={15}>a</Tk>
                    </Denom>
                  </Frac>
                </Preview>
              </Item>
              <Item>
                <ItemTitle>二项式定理</ItemTitle>
                <Preview $axis={68}>
                  <Tk $w={11} $up $s={30}>(</Tk>
                  <Tk $w={23}>x</Tk>
                  <Tk $w={27} $up $s={34}>+</Tk>
                  <Tk $w={16}>a</Tk>
                  <Tk $w={12} $up $s={30}>)</Tk>
                  <Sup $w={21}>n</Sup>
                  <Tk $w={30} $up $s={34}>=</Tk>
                  <BigOp $w={43}>
                    <Limit $italic>n</Limit>
                    <Sigma>∑</Sigma>
                    <Limit $low><i>k</i>=0</Limit>
                  </BigOp>
                  <Tall $w={13}>(</Tall>
                  <Stack $w={16}>
                    <span>n</span>
                    <span>k</span>
                  </Stack>
                  <Tall $w={19}>)</Tall>
                  <Tk $w={16}>x</Tk>
                  <Sup $w={14}>k</Sup>
                  <Tk $w={17}>a</Tk>
                  <Sup $w={42}>n−k</Sup>
                </Preview>
              </Item>
              <Item>
                <ItemTitle>傅立叶级数</ItemTitle>
                <Preview $axis={68}>
                  <Tk $w={16}>f</Tk>
                  <Tk $w={11} $up $s={30}>(</Tk>
                  <Tk $w={16}>x</Tk>
                  <Tk $w={19} $up $s={30}>)</Tk>
                  <Tk $w={29} $up $s={34}>=</Tk>
                  <Tk $w={16}>a</Tk>
                  <Sub $w={19} $up>0</Sub>
                  <Tk $w={27} $up $s={34}>+</Tk>
                  <BigOp $w={44}>
                    <Limit>∞</Limit>
                    <Sigma>∑</Sigma>
                    <Limit $low><i>n</i>=1</Limit>
                  </BigOp>
                  <Tall $w={13}>(</Tall>
                  <Tk $w={16}>a</Tk>
                  <Sub $w={19}>n</Sub>
                  <Tk $w={44} $up>cos</Tk>
                  <Frac $w={48} $r={7}>
                    <Numer><Tk $w={48} $s={31}>nπx</Tk></Numer>
                    <Denom><Tk $w={16}>L</Tk></Denom>
                  </Frac>
                  <Tk $w={27} $up $s={34}>+</Tk>
                  <Tk $w={15}>b</Tk>
                  <Sub $w={19}>n</Sub>
                  <Tk $w={40} $up>sin</Tk>
                  <Frac $w={48} $r={1}>
                    <Numer><Tk $w={48} $s={31}>nπx</Tk></Numer>
                    <Denom><Tk $w={16}>L</Tk></Denom>
                  </Frac>
                  <Tall $w={13}>)</Tall>
                </Preview>
              </Item>
              <Item>
                <ItemTitle>勾股定理</ItemTitle>
                <Preview $axis={27}>
                  <Tk $w={16}>a</Tk>
                  <Sup $w={18} $up>2</Sup>
                  <Tk $w={28} $up $s={34}>+</Tk>
                  <Tk $w={16}>b</Tk>
                  <Sup $w={20} $up>2</Sup>
                  <Tk $w={30} $up $s={34}>=</Tk>
                  <Tk $w={14}>c</Tk>
                  <Sup $w={14} $up>2</Sup>
                </Preview>
              </Item>
              <Item>
                <ItemTitle>和的展开式</ItemTitle>
                <Preview $axis={51}>
                  <Tk $w={11} $up $s={30}>(</Tk>
                  <Tk $w={22} $up>1</Tk>
                  <Tk $w={26} $up $s={34}>+</Tk>
                  <Tk $w={15}>x</Tk>
                  <Tk $w={12} $up $s={30}>)</Tk>
                  <Sup $w={22}>n</Sup>
                  <Tk $w={30} $up $s={34}>=</Tk>
                  <Tk $w={22} $up>1</Tk>
                  <Tk $w={26} $up $s={34}>+</Tk>
                  <Frac $w={33} $r={7}>
                    <Numer><Tk $w={33}>nx</Tk></Numer>
                    <Denom><Tk $w={24} $up>1!</Tk></Denom>
                  </Frac>
                  <Tk $w={25} $up $s={34}>+</Tk>
                  <Frac $w={134} $r={7}>
                    <Numer>
                      <Tk $w={16}>n</Tk>
                      <Tk $w={12} $up $s={30}>(</Tk>
                      <Tk $w={24}>n</Tk>
                      <Tk $w={27} $up $s={34}>−</Tk>
                      <Tk $w={14} $up>1</Tk>
                      <Tk $w={13} $up $s={30}>)</Tk>
                      <Tk $w={16}>x</Tk>
                      <Sup $w={12} $up>2</Sup>
                    </Numer>
                    <Denom><Tk $w={24} $up>2!</Tk></Denom>
                  </Frac>
                  <Tk $w={27} $up $s={34}>+</Tk>
                  <Tk $w={28} $up $s={26}>⋯</Tk>
                </Preview>
              </Item>
            </GalleryList>
            <Scroll>
              <ScrollBtn><i /></ScrollBtn>
              <Thumb />
              <Track />
              <ScrollBtn $down><i /></ScrollBtn>
            </Scroll>
          </GalleryTop>
          <MenuBlock>
            <MenuItem>
              <Art box="1697 1166 32 32">
                <rect x="1698.500" y="1170.500" width="27" height="23" fill="#fff" stroke={GREY} strokeWidth="1.300" />
                <path d="M1701 1173H1723V1177H1701ZM1701 1179H1706V1192H1701Z" fill="#b9b9b9" />
                <Globe cx={1717.5} cy={1187} r={10} halo="#fff" />
                <path d="M1708 1188Q1701 1194 1708 1194.500Q1716 1195 1724 1188M1718 1187.500L1725 1187L1723.500 1193" stroke="#f9622c" strokeWidth="2" />
              </Art>
              <Latin $sp={0.3}>Office.com 中的其他公式<Mn k="M" /></Latin>
              <SubArrow $c="#666" />
            </MenuItem>
            <MenuItem>
              <Pi w={25} h={24} />
              <Latin style={{ marginLeft: 7 }}>插入新公式<Mn k="I" /></Latin>
            </MenuItem>
            <MenuItem>
              <Art box="1697 1263 32 30">
                <rect x="1697.800" y="1265.800" width="27.500" height="24.500" rx="2" fill="#fff" stroke={GREY} strokeWidth="1.500" />
                <path d="M1701.500 1270.500H1721.500V1286.500H1701.500ZM1701.500 1275.500H1721.500M1701.500 1281.500H1721.500M1706.500 1270.500V1286.500M1711.500 1270.500V1286.500M1716.500 1270.500V1286.500" stroke="#c5d9ee" />
                <path d="M1702 1278L1704 1282L1707 1274.500H1712" stroke={BLUE} strokeWidth="1.400" />
                <path d="M1709 1282L1712 1276L1725 1263.500L1728 1266L1715 1279Z" fill="#6f6f6f" stroke="#fff" strokeWidth="0.600" />
              </Art>
              墨迹公式<Mn k="K" />
            </MenuItem>
            <MenuItem $off>
              <svg width="32" height="32" viewBox="0 0 32 32" fill="none">
                <path d="M1.700 2.700H16.300V17.300H1.700Z" fill="#f5f1f7" stroke="#b5b1b7" strokeWidth="1.400" />
                <path d="M2 11H16V17H2Z" fill="#b1adb3" />
                <path d="M6 13H12V17H6Z" fill="#fff" />
                <path d="M8 13H10V17H8Z" fill="#b1adb3" />
                <path d="M12 10H31V31H12Z" fill="#fff" />
                <text x="13" y="29" fontFamily="Liberation Serif" fontWeight="700" fontSize="34" textLength="17" lengthAdjust="spacingAndGlyphs" fill="#b1adb3">π</text>
              </svg>
              将所选内容保存到公式库<Mn k="S" />...
            </MenuItem>
          </MenuBlock>
        </Gallery>
      </Window>
    </>
  );
}
